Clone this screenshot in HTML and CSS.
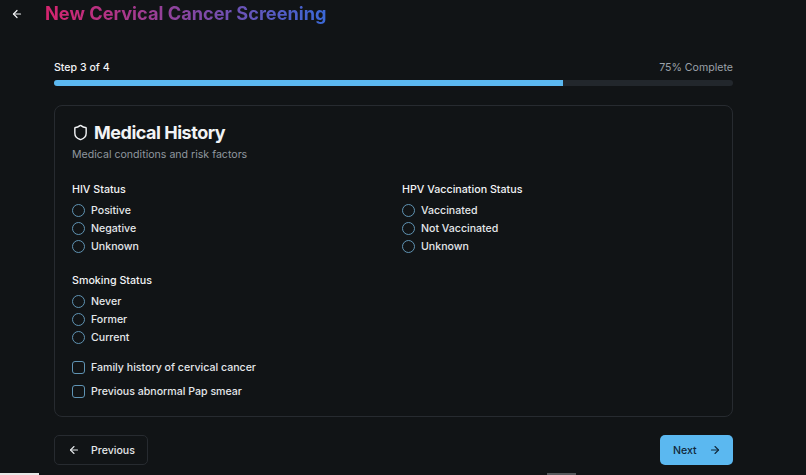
FILE: index.html
```html
<!DOCTYPE html>
<html lang="en">
<head>
    <meta charset="UTF-8">
    <meta name="viewport" content="width=device-width, initial-scale=1.0">
    <title>New Cervical Cancer Screening</title>
    <link rel="stylesheet" href="styles.css">
</head>
<body>

    <div class="header">
        <button class="back-button" aria-label="Back">
            <svg width="12" height="12" viewBox="0 0 24 24" fill="none" stroke="currentColor" stroke-width="2.4" stroke-linecap="round" stroke-linejoin="round"><path d="M19 12H5"/><path d="M12 19l-7-7 7-7"/></svg>
        </button>
        <h1>New Cervical Cancer Screening</h1>
    </div>

    <div class="container">
        <!-- Progress -->
        <div class="progress-labels">
            <span class="step">Step 3 of 4</span>
            <span class="percent">75% Complete</span>
        </div>
        <div class="progress-track">
            <div class="progress-fill"></div>
        </div>

        <!-- Form card -->
        <div class="card">
            <div class="card-title">
                <svg width="17" height="17" viewBox="0 0 24 24" fill="none" stroke="currentColor" stroke-width="2" stroke-linecap="round" stroke-linejoin="round"><path d="M20 13c0 5-3.5 7.5-7.66 8.95a1 1 0 0 1-.67-.01C7.5 20.5 4 18 4 13V6a1 1 0 0 1 1-1c2 0 4.5-1.2 6.24-2.72a1.17 1.17 0 0 1 1.52 0C14.51 3.81 17 5 19 5a1 1 0 0 1 1 1z"/></svg>
                <h2>Medical History</h2>
            </div>
            <p class="card-subtitle">Medical conditions and risk factors</p>

            <div class="field-grid">
                <div class="field">
                    <p class="field-label">HIV Status</p>
                    <label class="option"><span class="radio"></span>Positive</label>
                    <label class="option"><span class="radio"></span>Negative</label>
                    <label class="option"><span class="radio"></span>Unknown</label>
                </div>
                <div class="field">
                    <p class="field-label">HPV Vaccination Status</p>
                    <label class="option"><span class="radio"></span>Vaccinated</label>
                    <label class="option"><span class="radio"></span>Not Vaccinated</label>
                    <label class="option"><span class="radio"></span>Unknown</label>
                </div>
                <div class="field">
                    <p class="field-label">Smoking Status</p>
                    <label class="option"><span class="radio"></span>Never</label>
                    <label class="option"><span class="radio"></span>Former</label>
                    <label class="option"><span class="radio"></span>Current</label>
                </div>
            </div>

            <div class="checks">
                <label class="option"><span class="checkbox"></span>Family history of cervical cancer</label>
                <label class="option"><span class="checkbox"></span>Previous abnormal Pap smear</label>
            </div>
        </div>

        <!-- Navigation -->
        <div class="actions">
            <button class="btn btn-outline">
                <svg width="12" height="12" viewBox="0 0 24 24" fill="none" stroke="currentColor" stroke-width="2.2" stroke-linecap="round" stroke-linejoin="round"><path d="M19 12H5"/><path d="M12 19l-7-7 7-7"/></svg>
                Previous
            </button>
            <button class="btn btn-primary">
                Next
                <svg width="12" height="12" viewBox="0 0 24 24" fill="none" stroke="currentColor" stroke-width="2.2" stroke-linecap="round" stroke-linejoin="round"><path d="M5 12h14"/><path d="M12 5l7 7-7 7"/></svg>
            </button>
        </div>
    </div>

    <!-- Bits of the window edge along the bottom -->
    <div class="edge edge-left"></div>
    <div class="edge edge-mid"></div>

</body>
</html>
```

FILE: styles.css
```css
/* Basic reset */
* {
    margin: 0;
    padding: 0;
    box-sizing: border-box;
}

body {
    position: relative;
    height: 475px;
    overflow: hidden;
    background-color: #111416;
    font-family: Inter, "Liberation Sans", sans-serif;
    color: #f1f3f5;
}

/* Header */
.header {
    display: flex;
    align-items: center;
    height: 27px;
    padding-left: 11px;
}

.back-button {
    display: flex;
    width: 12px;
    height: 12px;
    background: none;
    border: none;
    color: #f1f3f5;
}

.header h1 {
    margin-left: 22px;
    font-size: 18.2px;
    font-weight: 700;
    line-height: 27px;
    background: linear-gradient(to right, #d6246e, #3a68d6);
    -webkit-background-clip: text;
    background-clip: text;
    color: transparent;
}

/* Page column */
.container {
    width: 679px;
    margin-left: 54px;
    padding-top: 32px;
}

.progress-labels {
    display: flex;
    justify-content: space-between;
    align-items: center;
    height: 16px;
    font-size: 10.6px;
}

.step {
    font-weight: 500;
}

.percent {
    color: #9aa1a9;
}

.progress-track {
    height: 6px;
    margin-top: 5px;
    background-color: #22272c;
    border-radius: 3px;
    overflow: hidden;
}

.progress-fill {
    width: 75%;
    height: 100%;
    background-color: #5bb8f0;
}

/* Card */
.card {
    height: 312px;
    margin-top: 19px;
    padding: 15px 17px;
    border: 1px solid #272b30;
    border-radius: 8px;
}

.card-title {
    display: flex;
    align-items: center;
    gap: 5px;
    height: 22px;
}

.card-title h2 {
    font-size: 18px;
    font-weight: 700;
    letter-spacing: -0.48px;
}

.card-subtitle {
    margin-top: 5px;
    font-size: 10.6px;
    line-height: 14px;
    color: #8f979f;
}

.field-grid {
    display: grid;
    grid-template-columns: 330px 1fr;
    row-gap: 18px;
    margin-top: 20px;
}

.field-label {
    margin-bottom: 3px;
    font-size: 10.7px;
    font-weight: 500;
    line-height: 16px;
}

.option {
    display: flex;
    align-items: center;
    gap: 6px;
    height: 18px;
    font-size: 10.6px;
    font-weight: 500;
    color: #e4e7ea;
}

.radio {
    width: 13px;
    height: 13px;
    border: 1px solid #5f93b3;
    border-radius: 50%;
}

.checkbox {
    width: 13px;
    height: 13px;
    border: 1px solid #5f93b3;
    border-radius: 3px;
}

.checks {
    display: flex;
    flex-direction: column;
    gap: 6px;
    margin-top: 12px;
}

/* Navigation buttons */
.actions {
    display: flex;
    justify-content: space-between;
    margin-top: 18px;
}

.btn {
    display: flex;
    align-items: center;
    gap: 11px;
    height: 30px;
    font-family: inherit;
    font-size: 10.6px;
    font-weight: 500;
    border-radius: 5px;
}

.btn-outline {
    width: 94px;
    padding-left: 13px;
    background: none;
    border: 1px solid #272b30;
    color: #e4e7ea;
}

.btn-primary {
    width: 73px;
    padding-left: 13px;
    gap: 12px;
    background-color: #5bb8f0;
    border: none;
    color: #10283a;
}

/* Window edge pieces */
.edge {
    position: absolute;
    bottom: 0;
    height: 2px;
}

.edge-left {
    left: 0;
    width: 39px;
    background-color: #e8e8e8;
}

.edge-mid {
    left: 547px;
    width: 29px;
    background-color: #55585b;
}
```
